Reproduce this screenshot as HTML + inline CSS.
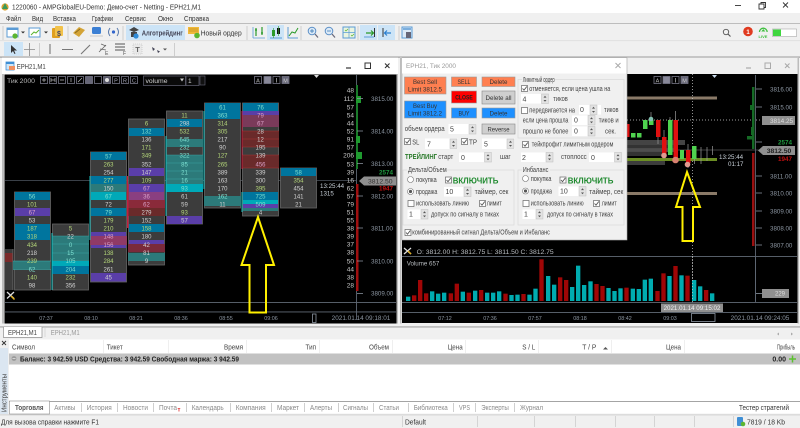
<!DOCTYPE html>
<html lang="ru"><head><meta charset="utf-8"><title>EPH21</title>
<style>
html,body{margin:0;padding:0;background:#f0f0f0;width:800px;height:428px;overflow:hidden}
svg{display:block;font-family:"Liberation Sans","DejaVu Sans",sans-serif;font-size:7px}
.c text,text.m{text-anchor:middle}
.cols text{font-size:6px;text-anchor:middle}
.g{fill:#b5d77a}.w{fill:#d2d2d2}.t{fill:#7fe0d0}.p{fill:#d9a0c8}
.ax text{font-size:6.5px;fill:#c8c8c8;text-anchor:end}
.pr text{font-size:6.2px;fill:#8d97a3}
.tm text{font-size:5.4px;fill:#8d97a3;text-anchor:middle}
.d text{font-size:7px;fill:#444}
.hd text{font-size:7px;fill:#444}
.tb text{font-size:7px;fill:#8a8a8a}
.dk{fill:#333}
.sm rect{fill:none;stroke:#778;stroke-width:.8}
</style></head><body>
<svg width="800" height="428" viewBox="0 0 800 428" xmlns="http://www.w3.org/2000/svg">
<defs>
<g id="sp"><rect width="7" height="9.5" fill="#e2e2e2" stroke="#bbb" stroke-width=".5"/><path d="M2 3.6 3.5 1.8 5 3.6zM2 6 3.5 7.8 5 6z" fill="#555"/></g>
<g id="ck"><rect x=".5" y=".5" width="6" height="6" fill="#fff" stroke="#666" stroke-width=".7"/><path d="M1.5 3.5 3 5.2 5.800 1.500" fill="none" stroke="#555" stroke-width=".9"/></g>
<g id="uk"><rect x=".5" y=".5" width="6" height="6" fill="#fff" stroke="#666" stroke-width=".7"/></g>
</defs>

<!-- window chrome -->
<rect width="800" height="13" fill="#fff"/>
<rect y="13" width="800" height="403" fill="#f0f0f0"/>
<circle cx="5" cy="7" r="3.6" fill="#d9a033"/><path d="M2 9 5 3 8 9z" fill="#3a9a5a"/>
<text x="12" y="9.500" font-size="7.500" fill="#333" textLength="189" lengthAdjust="spacingAndGlyphs">1220060 - AMPGlobalEU-Demo: Демо-счет - Netting - EPH21,M1</text>
<path d="M735 5.5h6" stroke="#333" stroke-width=".9"/>
<path d="M759 4h5v5h-5zM761 4V2.500h4.500v5H764" fill="none" stroke="#333" stroke-width=".9"/>
<path d="M783 2.500l5 5M788 2.500l-5 5" stroke="#333" stroke-width=".9"/>
<g font-size="7.500" fill="#333">
<text x="6" y="21" textLength="15" lengthAdjust="spacingAndGlyphs">Файл</text><text x="32" y="21" textLength="11" lengthAdjust="spacingAndGlyphs">Вид</text><text x="53" y="21" textLength="23" lengthAdjust="spacingAndGlyphs">Вставка</text><text x="92" y="21" textLength="21" lengthAdjust="spacingAndGlyphs">Графики</text><text x="125" y="21" textLength="21" lengthAdjust="spacingAndGlyphs">Сервис</text><text x="158" y="21" textLength="15" lengthAdjust="spacingAndGlyphs">Окно</text><text x="184" y="21" textLength="25" lengthAdjust="spacingAndGlyphs">Справка</text>
</g>
<rect y="23" width="800" height="1" fill="#bdbdbd"/>
<rect y="40.500" width="800" height=".6" fill="#d4d4d4"/>

<!-- toolbar 1 -->
<path d="M3 26v14M68 26v14M123 26v14M247 26v14M301 26v14M358 26v14M399 26v14" stroke="#c6c6c6" stroke-width=".8"/>
<rect x="7" y="28" width="11" height="9" fill="#fff" stroke="#5b9bd5"/><rect x="7" y="28" width="11" height="2" fill="#5b9bd5"/><circle cx="15" cy="36" r="2.600" fill="#5cb531"/>
<path d="M21 31.500h4l-2 2z" fill="#333"/>
<rect x="29" y="28" width="11" height="9" fill="#fff" stroke="#5b9bd5"/><path d="M31 35l3-3 2 1 3-3" fill="none" stroke="#5cb531"/>
<path d="M44 31.500h4l-2 2z" fill="#333"/>
<rect x="52" y="28" width="8" height="10" rx="1" fill="#e0a020"/><rect x="55" y="26" width="8" height="10" rx="1" fill="#f2c24a"/><text x="57" y="36" font-size="7" font-weight="bold" fill="#446">$</text>
<path d="M73 33l6-6 6 3-6 7z" fill="#d4a437"/><path d="M75 33l5-4" stroke="#8a6a20"/>
<rect x="92" y="27" width="9" height="7" rx="1.500" fill="#3b7fd4"/><path d="M90 35h13v2H90z" fill="#ddd"/>
<path d="M110 28q-3 4 0 8M117 28q3 4 0 8" fill="none" stroke="#5577aa"/><circle cx="113.500" cy="32" r="1.600" fill="#3366cc"/>
<rect x="126" y="25" width="59" height="15" fill="#cce4f7"/>
<path d="M129 30l5-3 5 3-5 2zM131 32h6v5h-6z" fill="#444"/><circle cx="136" cy="36" r="2.600" fill="#2e8bd8"/>
<text x="141.700" y="35.500" font-size="7.500" font-weight="bold" fill="#445" textLength="41" lengthAdjust="spacingAndGlyphs">Алготрейдинг</text>
<rect x="188" y="27" width="11" height="7" fill="#f0b93a"/><path d="M189 29h9M189 31h9" stroke="#a67a10" stroke-width=".6"/><circle cx="197" cy="35.500" r="2.800" fill="#5cb531"/>
<text x="200.700" y="35.500" font-size="7.500" fill="#333" textLength="41" lengthAdjust="spacingAndGlyphs">Новый ордер</text>
<path d="M253 38h12M253 27v11" stroke="#5b9bd5" stroke-width=".8"/><path d="M256 28v8M262 27v8M255 30h2M261 33h2" stroke="#2a9a2a" stroke-width="1.200"/>
<rect x="267" y="25" width="17" height="15" fill="#cce4f7"/><path d="M270 38h12" stroke="#5b9bd5"/><rect x="272" y="30" width="3" height="6" fill="#2a9a2a"/><rect x="277" y="28" width="3" height="6" fill="#111"/><path d="M273.500 28v10M278.500 26v10" stroke="#2a9a2a" stroke-width=".6"/>
<path d="M288 27v11h10" stroke="#5b9bd5" fill="none"/><path d="M289 36l3-4 3 1 3-5" fill="none" stroke="#2a9a2a"/>
<circle cx="312" cy="31" r="3.800" fill="#dceaf7" stroke="#5b8fc7"/><path d="M315 34l3 3.500" stroke="#667" stroke-width="1.200"/><path d="M310 31h4M312 29v4" stroke="#2a6fb0" stroke-width=".7"/>
<circle cx="329" cy="31" r="3.800" fill="#dceaf7" stroke="#5b8fc7"/><path d="M332 34l3 3.500" stroke="#667" stroke-width="1.200"/><path d="M327 31h4" stroke="#2a6fb0" stroke-width=".7"/>
<rect x="343" y="27" width="12" height="11" fill="#eaf4e0" stroke="#5b9bd5"/><path d="M349 27v11M343 32.500h12" stroke="#5b9bd5" stroke-width=".7"/><path d="M345 30l1 1 2-2M351 35l1 1 2-2" stroke="#5cb531" fill="none" stroke-width=".7"/>
<rect x="360" y="25" width="17" height="15" fill="#cce4f7"/><path d="M366 33h7M371 30.500l2.500 2.500-2.500 2.500" fill="none" stroke="#2a9a2a" stroke-width="1.200"/><path d="M374.500 28v9" stroke="#333"/><path d="M364 37h10" stroke="#5b9bd5"/>
<rect x="378" y="25" width="17" height="15" fill="#cce4f7"/><path d="M391 33h-6M387 30.500l-2.500 2.500 2.500 2.500" fill="none" stroke="#2a7fd0" stroke-width="1.200"/><path d="M383 28v9" stroke="#333"/>
<rect x="402" y="27" width="10" height="11" fill="#dbe9f6" stroke="#5b9bd5"/><rect x="406" y="32" width="5" height="6" fill="#667"/><path d="M403 29h8" stroke="#5b9bd5" stroke-width="1.500"/>
<circle cx="726" cy="32" r="2.700" fill="none" stroke="#555" stroke-width=".9"/><path d="M728 34l2.500 2.500" stroke="#555" stroke-width="1.100"/>
<circle cx="748" cy="31.500" r="4.800" fill="#e03a1f"/><text x="748" y="34" class="m" font-size="6" font-weight="bold" fill="#fff">1</text>
<path d="M759.500 32a3.800 3.800 0 1 1 7.600 0" fill="none" stroke="#3fbf3f" stroke-width="1.300"/><path d="M763.300 29l2 2.500h-4z" fill="#3fbf3f"/><text x="763" y="38" class="m" font-size="4" font-weight="bold" fill="#3fbf3f">LIVE</text>
<rect x="772.500" y="29" width="24" height="7.500" fill="#fff" stroke="#aaa" stroke-width=".6"/><rect x="773" y="29.500" width="8" height="6.500" fill="#3fd63f"/>

<!-- toolbar 2 -->
<rect x="4" y="42" width="19" height="14" fill="#cce4f7"/><path d="M11 45l0 8 2-2 1.500 3 1-.5-1.500-3h3z" fill="#333"/>
<path d="M29.500 43v13M24 49.500h11" stroke="#888" stroke-width=".8"/>
<path d="M39.500 43v13M174.500 43v13" stroke="#c6c6c6" stroke-width=".8"/>
<path d="M50 44v10M62 49.500h11M81 54l9-9" stroke="#777" stroke-width="1.100"/>
<path d="M99 52l7-7M101 44l5 2M100 49l6 1" stroke="#666" stroke-width=".8" fill="none"/><text x="105" y="55" font-size="5" fill="#555">E</text>
<path d="M115 44h10M115 47h10M115 50h10" stroke="#555" stroke-width="1"/><text x="123" y="55" font-size="5" fill="#555">F</text>
<rect x="133" y="44" width="9" height="10" fill="#e8e8e8" stroke="#bbb" stroke-dasharray="1 1" stroke-width=".6"/><text x="137.500" y="52" class="m" font-size="7.500" font-weight="bold" fill="#666">T</text>
<path d="M152 47l3 2-2 2zM157 50l3 1.500-2 1.500z" fill="#445"/><path d="M163 48.500h4l-2 2z" fill="#555"/>
<rect y="56.500" width="800" height="1.200" fill="#9c9c9c"/>

<!-- left window -->
<rect x="2" y="57.500" width="396" height="266" fill="#f0f0f0"/>
<rect x="2" y="58" width="396" height="16" fill="#fff"/>
<rect x="6" y="62" width="8" height="8" fill="#cfe6f7" stroke="#3f8fd5" stroke-width=".8"/><rect x="6" y="62" width="8" height="2" fill="#3f8fd5"/><rect x="9" y="66" width="6" height="4" fill="#f09060"/>
<text x="16.700" y="69" font-size="7" fill="#444" textLength="29" lengthAdjust="spacingAndGlyphs">EPH21,M1</text>
<path d="M346 68h5" stroke="#333" stroke-width="1.200"/><rect x="365" y="63" width="5.500" height="5.500" fill="none" stroke="#333"/><path d="M385 63.500l4.500 4.500M389.500 63.500 385 68" stroke="#333" stroke-width="1.100"/>
<rect x="2" y="74" width="2" height="250" fill="#bcbcbc"/><rect x="396.500" y="74" width="1.500" height="250" fill="#bcbcbc"/>
<rect x="4.500" y="74.500" width="392" height="249" fill="#000"/>

<text x="7" y="83" font-size="6.500" fill="#b8b8b8" textLength="28" lengthAdjust="spacingAndGlyphs">Тик  2000</text>
<g class="sm"><rect x="40.500" y="76.500" width="7" height="7"/><rect x="49.500" y="76.500" width="7" height="7"/><rect x="58.500" y="76.500" width="7" height="7"/><rect x="67.500" y="76.500" width="7" height="7"/><rect x="76.500" y="76.500" width="7" height="7"/><rect x="85.500" y="76.500" width="7" height="7" style="fill:#667"/><rect x="94.500" y="76.500" width="7" height="7"/><rect x="103.500" y="76.500" width="7" height="7" style="fill:#556"/><rect x="112.500" y="76.500" width="7" height="7"/><rect x="121.500" y="76.500" width="7" height="7"/><rect x="130.500" y="76.500" width="7" height="7"/></g>
<path d="M42 80h4M44 78v4M51 78v4M55 78v4M51 80h4M60 80h4M71 78v4M78 82l4-4" stroke="#bbb" stroke-width=".7"/><circle cx="107" cy="80" r="2" fill="#ddd"/>
<text x="116" y="82.500" class="m" font-size="5.500" fill="#aab">P</text><text x="125" y="82.500" class="m" font-size="5.500" fill="#aab">R</text><text x="134" y="82.500" class="m" font-size="5.500" fill="#aab">C</text>
<rect x="143.500" y="76" width="42" height="9.500" fill="#0a0a0a" stroke="#667" stroke-width=".7"/><text x="145.500" y="83" font-size="6.500" fill="#ccc" textLength="22" lengthAdjust="spacingAndGlyphs">volume</text><path d="M180 78.500h4l-2 3z" fill="#ccc"/>
<rect x="186" y="76" width="13" height="9.500" fill="#0a0a0a" stroke="#667" stroke-width=".7"/><text x="188" y="83" font-size="6.500" fill="#ccc">1</text>
<rect x="200" y="76" width="5" height="9" fill="#111" stroke="#667" stroke-width=".6"/>
<g class="sm"><rect x="254.500" y="76.500" width="7" height="7"/><rect x="264" y="76.500" width="7" height="7" style="fill:#889"/><rect x="273" y="76.500" width="7" height="7"/><rect x="282" y="76.500" width="7" height="7" style="fill:#667"/></g>
<text x="258" y="82.500" class="m" font-size="5.500" fill="#bbb">A</text><text x="276.500" y="82.500" class="m" font-size="6" fill="#ddd">I</text><text x="285.500" y="82.500" class="m" font-size="5.500" fill="#ccc">M</text>
<path d="M314 75h5l-2.500 3z" fill="#ddd"/>

<rect x="5" y="180" width="351" height="1" fill="#3a4048"/>
<rect x="5" y="302" width="391" height=".9" fill="#5f6874"/>
<rect x="5" y="311.500" width="391" height=".9" fill="#5f6874"/>

<!-- footprint columns -->
<g class="cols">
<!-- col0 -->
<rect x="5" y="249" width="8" height="41" fill="#3c3c3c"/><rect x="5" y="253" width="8" height="9" fill="#7a2a2a"/><path d="M13 249v41" stroke="#666"/>
<!-- col1 -->
<rect x="14.500" y="192" width="36" height="98" fill="#3c3c3c" stroke="#666" stroke-width=".8"/>
<rect x="15" y="192" width="35" height="8" fill="#00759e"/><rect x="15" y="208" width="35" height="8" fill="#5a3ea8"/><rect x="15" y="224" width="35" height="16" fill="#00759e"/><rect x="13" y="261" width="37" height="8.500" fill="#2c7a7a"/><path d="M13 261h38M13 269.500h38" stroke="#3cb0b0" stroke-width=".5"/>
<g>
<text x="32" y="198.500" class="t">56</text><text x="32" y="206.500" class="g">101</text><text x="32" y="214.500" class="p">67</text><text x="32" y="222.500" class="w">53</text><text x="32" y="230.500" class="g">187</text><text x="32" y="238.500" class="g">318</text><text x="32" y="247" class="g">434</text><text x="32" y="255" class="w">218</text><text x="32" y="263" class="g">239</text><text x="32" y="271.500" class="t">62</text><text x="32" y="279.500" class="g">140</text><text x="32" y="287.500" class="w">98</text></g>
<!-- col2 -->
<rect x="52.500" y="224" width="36" height="66" fill="#3c3c3c" stroke="#666" stroke-width=".8"/>
<rect x="52" y="236" width="37" height="25" fill="#2c7a7a"/><path d="M52 236h37M52 244h37M52 253h37M52 261h37" stroke="#3cb0b0" stroke-width=".4"/>
<rect x="52" y="261" width="37" height="5" fill="#00a9b8"/><rect x="52" y="266" width="37" height="8" fill="#00759e"/><path d="M52 233v57" stroke="#19c0c0"/>
<text x="70.500" y="230.500" class="g">5</text><text x="70.500" y="238.500" class="w">22</text><text x="70.500" y="247" class="t">0</text><text x="70.500" y="255" class="t">15</text><text x="70.500" y="263" class="t">105</text><text x="70.500" y="271.500" class="t">204</text><text x="70.500" y="279.500" class="g">232</text><text x="70.500" y="287.500" class="w">356</text>
<!-- col3 -->
<rect x="90.500" y="152" width="36" height="130" fill="#3c3c3c" stroke="#666" stroke-width=".8"/>
<rect x="91" y="152" width="35" height="8" fill="#00759e"/><rect x="91" y="176" width="35" height="8" fill="#00759e"/><rect x="91" y="184" width="35" height="8" fill="#2c7a7a"/><rect x="91" y="192" width="35" height="8" fill="#00a9b8"/><rect x="91" y="208" width="35" height="8" fill="#00759e"/><rect x="91" y="232" width="35" height="16" fill="#5a3ea8"/><rect x="90" y="236" width="37" height="9" fill="#9a3a5a" opacity=".85"/><rect x="91" y="273" width="35" height="8.500" fill="#5a3ea8"/>
<path d="M90 176v64" stroke="#19c0c0"/><path d="M127.500 176v52" stroke="#c02040"/>
<text x="108.500" y="158.500" class="t">57</text><text x="108.500" y="166.500" class="g">263</text><text x="108.500" y="174.500" class="w">254</text><text x="108.500" y="182.500" class="g">277</text><text x="108.500" y="190.500" class="w">150</text><text x="108.500" y="198.500" class="t">67</text><text x="108.500" y="206.500" class="w">72</text><text x="108.500" y="214.500" class="t">79</text><text x="108.500" y="222.500" class="g">179</text><text x="108.500" y="230.500" class="g">210</text><text x="108.500" y="238.500" class="p">148</text><text x="108.500" y="247" class="p">156</text><text x="108.500" y="255" class="g">138</text><text x="108.500" y="263" class="g">284</text><text x="108.500" y="271.500" class="w">261</text><text x="108.500" y="279.500" class="w">45</text>
<!-- col4 -->
<rect x="128.500" y="119" width="36" height="146" fill="#3c3c3c" stroke="#666" stroke-width=".8"/>
<rect x="129" y="128" width="35" height="8" fill="#00759e"/><rect x="129" y="168" width="35" height="8" fill="#5a3ea8"/><rect x="129" y="184" width="35" height="8" fill="#5a3ea8"/><rect x="129" y="192" width="35" height="8" fill="#8a3f80"/><rect x="128" y="200" width="37" height="8" fill="#8a2a3a"/><rect x="128" y="208" width="37" height="8" fill="#6a2a2a"/><rect x="129" y="224" width="35" height="8" fill="#00759e"/><rect x="129" y="240" width="35" height="8" fill="#5a3ea8"/><rect x="128" y="244" width="37" height="8" fill="#7a2a3a"/><rect x="128" y="253" width="37" height="8" fill="#2c7a7a"/>
<path d="M128 184v44" stroke="#c02040"/>
<text x="146.500" y="125.500" class="g">6</text><text x="146.500" y="133.500" class="t">132</text><text x="146.500" y="141.500" class="w">136</text><text x="146.500" y="149.500" class="g">171</text><text x="146.500" y="157.500" class="g">349</text><text x="146.500" y="166.500" class="w">352</text><text x="146.500" y="174.500" class="w">147</text><text x="146.500" y="182.500" class="g">109</text><text x="146.500" y="190.500" class="p">67</text><text x="146.500" y="198.500" class="p">36</text><text x="146.500" y="206.500" class="p">62</text><text x="146.500" y="214.500" class="w">279</text><text x="146.500" y="222.500" class="w">152</text><text x="146.500" y="230.500" class="g">158</text><text x="146.500" y="238.500" class="w">180</text><text x="146.500" y="247" class="w">42</text><text x="146.500" y="255" class="w">81</text><text x="146.500" y="263" class="w">9</text>
<!-- col5 -->
<rect x="166.500" y="111" width="36" height="113" fill="#3c3c3c" stroke="#666" stroke-width=".8"/>
<rect x="167" y="119" width="35" height="8" fill="#00759e"/><rect x="166" y="139" width="37" height="8" fill="#2c7a7a"/><rect x="166" y="155" width="37" height="29" fill="#2c7a7a"/><path d="M166 155h37M166 163h37M166 171h37M166 179h37" stroke="#3cb0b0" stroke-width=".4"/><rect x="166" y="184" width="37" height="8" fill="#00a9b8"/><rect x="167" y="216" width="35" height="8" fill="#5a3ea8"/>
<path d="M166 136v80" stroke="#19c0c0"/>
<text x="184.500" y="117.500" class="g">11</text><text x="184.500" y="125.500" class="w">298</text><text x="184.500" y="133.500" class="g">532</text><text x="184.500" y="141.500" class="t">645</text><text x="184.500" y="149.500" class="t">232</text><text x="184.500" y="157.500" class="t">322</text><text x="184.500" y="166.500" class="t">85</text><text x="184.500" y="174.500" class="t">21</text><text x="184.500" y="182.500" class="t">16</text><text x="184.500" y="190.500" class="t">93</text><text x="184.500" y="198.500" class="w">61</text><text x="184.500" y="206.500" class="w">59</text><text x="184.500" y="214.500" class="g">93</text><text x="184.500" y="222.500" class="w">57</text>
<!-- col6 -->
<rect x="204.500" y="103" width="36" height="105" fill="#3c3c3c" stroke="#666" stroke-width=".8"/>
<rect x="205" y="103" width="35" height="8" fill="#00759e"/><rect x="205" y="111" width="35" height="8" fill="#00759e"/><rect x="204" y="196" width="37" height="10" fill="#2c7a7a"/>
<path d="M204 111v78" stroke="#19c0c0"/>
<text x="222.500" y="109.500" class="t">61</text><text x="222.500" y="117.500" class="t">363</text><text x="222.500" y="125.500" class="g">314</text><text x="222.500" y="133.500" class="g">305</text><text x="222.500" y="141.500" class="w">217</text><text x="222.500" y="149.500" class="w">90</text><text x="222.500" y="157.500" class="g">127</text><text x="222.500" y="166.500" class="g">265</text><text x="222.500" y="174.500" class="w">389</text><text x="222.500" y="182.500" class="w">163</text><text x="222.500" y="190.500" class="w">170</text><text x="222.500" y="198.500" class="t">162</text><text x="222.500" y="206.500" class="w">11</text>
<!-- col7 -->
<rect x="242.500" y="103" width="36" height="113" fill="#3c3c3c" stroke="#666" stroke-width=".8"/>
<rect x="243" y="103" width="35" height="8" fill="#00759e"/><rect x="242" y="111" width="37" height="4" fill="#5a3ea8"/><rect x="242" y="115" width="37" height="12" fill="#7a3a5a"/><rect x="242" y="131" width="37" height="16" fill="#6a2a2a"/><rect x="242" y="155" width="37" height="13" fill="#6a2a2a"/><path d="M242 131h37M242 139h37M242 147h37M242 155h37M242 168h37" stroke="#b33" stroke-width=".4"/>
<rect x="243" y="192" width="35" height="8" fill="#00759e"/><rect x="243" y="200" width="35" height="4" fill="#00a9b8"/><rect x="243" y="204" width="35" height="4" fill="#5a3ea8"/><rect x="243" y="208" width="35" height="3" fill="#2c7a7a"/>
<path d="M242 111v58" stroke="#c02040"/><path d="M242 192v20" stroke="#19c0c0"/>
<text x="260.500" y="109.500" class="t">76</text><text x="260.500" y="117.500" class="p">79</text><text x="260.500" y="125.500" class="p">67</text><text x="260.500" y="133.500" class="w">28</text><text x="260.500" y="141.500" class="w">12</text><text x="260.500" y="149.500" class="w">195</text><text x="260.500" y="157.500" class="w">139</text><text x="260.500" y="166.500" class="p">456</text><text x="260.500" y="174.500" class="w">339</text><text x="260.500" y="182.500" class="w">300</text><text x="260.500" y="190.500" class="g">395</text><text x="260.500" y="198.500" class="t">725</text><text x="260.500" y="206.500" class="t">509</text><text x="260.500" y="214.500" class="w">4</text>
<!-- col8 -->
<rect x="280.500" y="168" width="36" height="40" fill="#3c3c3c" stroke="#666" stroke-width=".8"/>
<rect x="281" y="168" width="35" height="8" fill="#00759e"/>
<text x="298.500" y="174.500" class="t">58</text><text x="298.500" y="182.500" class="g">354</text><text x="298.500" y="190.500" class="w">454</text><text x="298.500" y="198.500" class="w">141</text><text x="298.500" y="206.500" class="w">21</text>
</g>
<text x="320" y="188" font-size="6.200" fill="#c8d0d8">13:25:44</text><text x="320" y="195.500" font-size="6.200" fill="#c8d0d8">1315</text>

<!-- tools icon -->
<path d="M7 292l7 6.500M14 292l-7 6.500" stroke="#ddd" stroke-width="1.300"/><path d="M11 296l3.500 3.500" stroke="#e0b020" stroke-width="1.500"/>

<!-- left axis -->
<path d="M356.500 75v245" stroke="#5f6874" stroke-width=".9"/>
<rect x="356" y="85" width="2" height="84" fill="#1a7a2a"/><rect x="356" y="96" width="5" height="7" fill="#1f9a2f"/><rect x="356" y="136" width="4" height="7" fill="#1f9a2f"/><rect x="356" y="152" width="6" height="7" fill="#1f9a2f"/>
<rect x="356" y="184" width="2.500" height="107" fill="#a01010"/>
<g class="ax" transform="translate(0 -.6)"><text x="354" y="93">48</text><text x="354" y="101.500">112</text><text x="354" y="110">57</text><text x="354" y="118">54</text><text x="354" y="126">44</text><text x="354" y="134">52</text><text x="354" y="142">91</text><text x="354" y="150">57</text><text x="354" y="158">206</text><text x="354" y="167">53</text><text x="354" y="175">39</text><text x="354" y="183">16</text><text x="354" y="191">62</text><text x="354" y="199">57</text><text x="354" y="207">79</text><text x="354" y="215">51</text><text x="354" y="223">55</text><text x="354" y="231">38</text><text x="354" y="239">39</text><text x="354" y="247">37</text><text x="354" y="255">38</text><text x="354" y="264">50</text><text x="354" y="272">44</text><text x="354" y="280">38</text><text x="354" y="288">28</text></g>
<path d="M357 98.500h6M357 131h6M357 163.500h6M357 196h6M357 228h6M357 261h6M357 293.500h6" stroke="#8d97a3" stroke-width=".8"/>
<g class="pr"><text x="371" y="101">3815.00</text><text x="371" y="133.500">3814.00</text><text x="371" y="166">3813.00</text><text x="371" y="198.500">3812.00</text><text x="371" y="230.500">3811.00</text><text x="371" y="263.500">3810.00</text><text x="371" y="295.500">3809.00</text></g>
<text x="379" y="174.500" font-size="6.300" font-weight="bold" fill="#1f9a3f">2574</text>
<text x="379" y="190.500" font-size="6.300" font-weight="bold" fill="#c01010">1947</text>
<path d="M359 181l5-4.500h32v9h-32z" fill="#8f8f8f"/><text x="368" y="183.500" font-size="6.800" fill="#333">3812.50</text>
<g class="tm"><text x="46" y="320">07:37</text><text x="91" y="320">08:10</text><text x="136" y="320">08:21</text><text x="181" y="320">08:36</text><text x="226" y="320">08:55</text><text x="271" y="320">09:06</text><text x="361" y="320" style="font-size:6.400px">2021.01.14 09:18:01</text></g>
<rect x="312.500" y="314" width="3.500" height="8.500" fill="none" stroke="#8d97a3" stroke-width=".8"/>
<!-- yellow arrow left -->
<path d="M258 217 241.500 265H249.500V312.500H266V265H274Z" fill="none" stroke="#fff000" stroke-width="2"/>

<!-- right window -->
<rect x="400" y="57.500" width="398.500" height="266" fill="#f0f0f0"/>
<rect x="400" y="58" width="1.500" height="266" fill="#bcbcbc"/><rect x="797.500" y="58" width="1.500" height="266" fill="#bcbcbc"/>
<path d="M746 68h5" stroke="#aaa" stroke-width="1.200"/><rect x="765" y="63" width="5.500" height="5.500" fill="none" stroke="#aaa"/><path d="M785 63.500l4.500 4.500M789.500 63.500 785 68" stroke="#aaa" stroke-width="1.100"/>
<rect x="402" y="74" width="395.500" height="249" fill="#000"/>

<!-- right chart -->
<rect x="627" y="96.500" width="90" height="3" fill="#8a7a68"/><rect x="627" y="192" width="90" height="3" fill="#8a7a68"/>
<rect x="627" y="140" width="58" height="5" fill="#444"/><rect x="627" y="145" width="50" height="3" fill="#333"/><rect x="627" y="148" width="48" height="4" fill="#4a4a4a"/><rect x="627" y="152" width="38" height="4" fill="#333"/><rect x="627" y="161" width="38" height="4" fill="#3c3c3c"/>
<rect x="627" y="158" width="90" height="3" fill="#6b8e23"/>
<path d="M627 120H762" stroke="#cfcfcf" stroke-width=".7" stroke-dasharray="1 2"/>
<path d="M692.500 74v240" stroke="#cfcfcf" stroke-width=".7" stroke-dasharray="1 2"/>
<path d="M627 150H762" stroke="#555" stroke-width=".7"/>
<!-- candles -->
<g>
<path d="M651 112v8M664.500 137v5M658 137v7M664 130v8M670 120v-3M675.500 111v9M675.500 158v5M682 150v9M688 144v6M688 164v4M694.500 159v5M701 147v17M707 147v14M712.500 146v9" stroke="#999" stroke-width=".7"/>
<rect x="627" y="124" width="2.500" height="13" fill="#e01010"/>
<rect x="631" y="133" width="4.500" height="4.500" fill="#4fd24f"/><rect x="637" y="133" width="4.500" height="4.500" fill="#4fd24f"/>
<rect x="643" y="120" width="4.500" height="9" fill="#4fd24f"/><rect x="649" y="120" width="4.500" height="5" fill="#4fd24f"/><circle cx="651" cy="119" r="2.300" fill="#80c0b0"/>
<rect x="656" y="120" width="4.500" height="17" fill="#e01010"/>
<rect x="662" y="137" width="4.500" height="18" fill="#e01010"/><circle cx="664" cy="155.500" r="2.800" fill="#e09a90"/>
<rect x="668" y="120" width="4.500" height="35" fill="#4fd24f"/>
<rect x="673.500" y="120" width="4.500" height="38" fill="#e01010"/><circle cx="675.500" cy="160" r="3.300" fill="#d88070"/>
<rect x="680" y="150" width="4" height="9" fill="#4fd24f"/>
<rect x="686" y="150" width="4.500" height="13" fill="#e01010"/><circle cx="687.500" cy="164.500" r="2.800" fill="#e09a90"/>
<rect x="692" y="146" width="4.500" height="13" fill="#4fd24f"/>
</g>
<text x="719" y="159" font-size="6.200" fill="#c8d0d8">13:25:44</text><text x="728" y="166" font-size="6.200" fill="#c8d0d8">01:17</text>
<path d="M687 172 676 207H682.500V241H693V207H700Z" fill="none" stroke="#fff000" stroke-width="2"/>
<g class="sm"><rect x="654" y="76.500" width="7" height="7"/><rect x="663" y="76.500" width="7" height="7" style="fill:#889"/><rect x="672" y="76.500" width="7" height="7"/><rect x="681" y="76.500" width="7" height="7" style="fill:#667"/></g>
<text x="657.500" y="82.500" class="m" font-size="5.500" fill="#bbb">A</text><text x="675.500" y="82.500" class="m" font-size="6" fill="#ddd">I</text><text x="684.500" y="82.500" class="m" font-size="5.500" fill="#ccc">M</text>
<path d="M712 75h5l-2.500 3z" fill="#cde"/>
<path d="M755.500 75v226" stroke="#5f6874" stroke-width=".9"/>
<rect x="752" y="87" width="2.500" height="62" fill="#156a25"/><rect x="750" y="105" width="4.500" height="5" fill="#156a25"/><rect x="747" y="136" width="7" height="3.500" fill="#156a25"/><rect x="751" y="127" width="3.500" height="8" fill="#156a25"/>
<rect x="752" y="153" width="2.500" height="93" fill="#9a1010" stroke-dasharray="3 1"/>
<path d="M756 89h6M756 107h6M756 142h6M756 176h6M756 193h6M756 211h6M756 228h6M756 245h6" stroke="#8d97a3" stroke-width=".8"/>
<g class="pr"><text x="770" y="91.500">3816.00</text><text x="770" y="109.500">3815.00</text><text x="770" y="178.500">3811.00</text><text x="770" y="195.500">3810.00</text><text x="770" y="213.500">3809.00</text><text x="770" y="230.500">3808.00</text><text x="770" y="247.500">3807.00</text></g>
<rect x="762" y="116" width="33" height="9" fill="#8f8f8f"/><text x="770" y="123" font-size="6.400" fill="#ddd">3814.25</text>
<text x="778" y="144.500" font-size="6.300" font-weight="bold" fill="#1f9a3f">2574</text>
<text x="778" y="161" font-size="6.300" font-weight="bold" fill="#c01010">1947</text>
<path d="M758 150.500l5-4.500h32v9h-32z" fill="#8f8f8f"/><text x="766.700" y="153" font-size="6.800" font-weight="bold" fill="#222">3812.50</text>

<!-- volume subwindow -->
<path d="M404 248l7 6M411 248l-7 6" stroke="#ddd" stroke-width="1.300"/><path d="M408 251l3 3" stroke="#e0b020" stroke-width="1.500"/>
<text x="416.700" y="254" font-size="6.500" fill="#b8bcc0" textLength="137" lengthAdjust="spacingAndGlyphs">O: 3812.00   H: 3812.75   L: 3811.50   C: 3812.75</text>
<rect x="402" y="256" width="395" height=".9" fill="#5f6874"/>
<rect x="402" y="302" width="395" height=".9" fill="#5f6874"/>
<rect x="402" y="312" width="395" height=".9" fill="#5f6874"/>
<text x="406.700" y="265.500" font-size="6.500" fill="#b8bcc0" textLength="32.700" lengthAdjust="spacingAndGlyphs">Volume 657</text>
<path d="M755.500 256v46" stroke="#5f6874" stroke-width=".9"/>
<g transform="translate(400 240) scale(.33333)">
<g fill="#00acb0"><rect x="18" y="170" width="13" height="13"/><rect x="90" y="154" width="13" height="29"/><rect x="108" y="161" width="13" height="22"/><rect x="126" y="158" width="13" height="25"/><rect x="182" y="155" width="13" height="28"/><rect x="219" y="152" width="13" height="31"/><rect x="255" y="158" width="13" height="25"/><rect x="273" y="158" width="13" height="25"/><rect x="291" y="154" width="13" height="29"/><rect x="328" y="165" width="13" height="18"/><rect x="346" y="164" width="13" height="19"/><rect x="382" y="164" width="13" height="19"/><rect x="400" y="146" width="13" height="37"/><rect x="438" y="108" width="13" height="75"/><rect x="456" y="134" width="13" height="49"/><rect x="510" y="141" width="13" height="42"/><rect x="528" y="77" width="13" height="106"/><rect x="546" y="135" width="13" height="48"/><rect x="565" y="124" width="13" height="59"/><rect x="619" y="144" width="13" height="39"/><rect x="637" y="153" width="13" height="30"/><rect x="655" y="145" width="13" height="38"/><rect x="692" y="146" width="13" height="37"/><rect x="710" y="147" width="13" height="36"/><rect x="728" y="119" width="13" height="64"/><rect x="746" y="116" width="13" height="67"/><rect x="802" y="108" width="13" height="75"/><rect x="838" y="106" width="13" height="77"/><rect x="876" y="120" width="13" height="63"/><rect x="894" y="139" width="13" height="44"/><rect x="930" y="160" width="13" height="23"/></g>
<g fill="#a00606"><rect x="36" y="166" width="13" height="17"/><rect x="54" y="120" width="13" height="63"/><rect x="72" y="160" width="13" height="23"/><rect x="146" y="160" width="13" height="23"/><rect x="164" y="131" width="13" height="52"/><rect x="200" y="158" width="13" height="25"/><rect x="237" y="150" width="13" height="33"/><rect x="310" y="161" width="13" height="22"/><rect x="364" y="162" width="13" height="21"/><rect x="418" y="58" width="13" height="125"/><rect x="474" y="112" width="13" height="71"/><rect x="492" y="120" width="13" height="63"/><rect x="583" y="132" width="13" height="51"/><rect x="601" y="138" width="13" height="45"/><rect x="673" y="143" width="13" height="40"/><rect x="766" y="153" width="13" height="30"/><rect x="784" y="100" width="13" height="83"/><rect x="820" y="78" width="13" height="105"/><rect x="856" y="107" width="13" height="76"/><rect x="912" y="150" width="13" height="33"/></g>
</g>
<path d="M692.500 256v46" stroke="#cfcfcf" stroke-width=".7" stroke-dasharray="1 2"/>
<path d="M756 293.500h6" stroke="#8d97a3" stroke-width=".8"/>
<rect x="762" y="289" width="27" height="9" fill="#8f8f8f"/><text x="785" y="295.500" text-anchor="end" font-size="6" fill="#ddd">229</text>
<rect x="661" y="303.500" width="62" height="8.500" fill="#8f8f8f"/><text x="692" y="310" class="m" font-size="6.200" fill="#eee">2021.01.14  09:15:02</text>
<g class="tm"><text x="445" y="320">07:12</text><text x="490" y="320">07:36</text><text x="535" y="320">07:57</text><text x="580" y="320">08:18</text><text x="625" y="320">08:42</text><text x="670" y="320">09:03</text><text x="760" y="320" style="font-size:6.400px">2021.01.14 09:24:05</text></g>
<rect x="691.500" y="313.500" width="23.500" height="8" fill="none" stroke="#8d97a3" stroke-width=".8"/>

<!-- dialog -->
<rect x="402" y="58" width="225" height="182" fill="#f0f0f0" stroke="#a8a8a8" stroke-width=".6"/>
<rect x="402" y="58" width="224.500" height="15.500" fill="#fff"/>
<text x="406" y="68" font-size="6.500" fill="#9a9a9a" textLength="50" lengthAdjust="spacingAndGlyphs">EPH21, Тик  2000</text>
<path d="M615.500 63l5 5M620.500 63l-5 5" stroke="#aaa"/>
<g font-size="6.500" class="c">
<rect x="404.500" y="77" width="41.500" height="17" fill="#ff7f50" stroke="#999" stroke-width=".6"/><text x="425" y="84" class="dk" textLength="24" lengthAdjust="spacingAndGlyphs">Best Sell</text><text x="425" y="91.500" class="dk" textLength="34" lengthAdjust="spacingAndGlyphs">Limit 3812.5</text>
<rect x="451.500" y="77" width="25" height="9.500" fill="#ff7f50" stroke="#999" stroke-width=".6"/><text x="464" y="84" class="dk" textLength="13" lengthAdjust="spacingAndGlyphs">SELL</text>
<rect x="482" y="77" width="33" height="9.500" fill="#ff7f50" stroke="#999" stroke-width=".6"/><text x="498.500" y="84" class="dk" textLength="18" lengthAdjust="spacingAndGlyphs">Delete</text>
<rect x="404.500" y="101" width="41.500" height="17" fill="#1e90ff" stroke="#999" stroke-width=".6"/><text x="425" y="108" class="dk" textLength="24" lengthAdjust="spacingAndGlyphs">Best Buy</text><text x="425" y="115.500" class="dk" textLength="34" lengthAdjust="spacingAndGlyphs">Limit 3812.2</text>
<rect x="451.500" y="91" width="25" height="12" fill="#f00" stroke="#999" stroke-width=".6"/><text x="464" y="99.500" font-weight="bold" font-size="6" fill="#222" textLength="17.500" lengthAdjust="spacingAndGlyphs">CLOSE</text>
<rect x="482" y="91" width="33" height="13" fill="#cfcfcf" stroke="#888" stroke-width=".6"/><text x="498.500" y="100" class="dk" textLength="26" lengthAdjust="spacingAndGlyphs">Delete all</text>
<rect x="451.500" y="108" width="25" height="10" fill="#1e90ff" stroke="#999" stroke-width=".6"/><text x="464" y="115.500" class="dk" textLength="11" lengthAdjust="spacingAndGlyphs">BUY</text>
<rect x="482" y="108" width="33" height="10" fill="#1e90ff" stroke="#999" stroke-width=".6"/><text x="498.500" y="115.500" class="dk" textLength="18" lengthAdjust="spacingAndGlyphs">Delete</text>
<rect x="482" y="124" width="33" height="10" fill="#cfcfcf" stroke="#888" stroke-width=".6"/><text x="498.500" y="131.500" class="dk" textLength="22" lengthAdjust="spacingAndGlyphs">Reverse</text>
</g>
<g class="d">
<text x="404.700" y="131" textLength="40" lengthAdjust="spacingAndGlyphs">объем ордера</text>
<rect x="448.500" y="124" width="28" height="10" fill="#fff"/><text x="450" y="131.500">5</text><use href="#sp" x="469" y="124.500"/>
<use href="#ck" x="404" y="138"/><text x="412.300" y="144.500" textLength="7" lengthAdjust="spacingAndGlyphs">SL</text>
<rect x="425" y="138.500" width="33" height="10.500" fill="#fff"/><text x="427" y="146.500">7</text><use href="#sp" x="450" y="139"/>
<use href="#ck" x="461" y="138"/><text x="469" y="144.500" textLength="8" lengthAdjust="spacingAndGlyphs">TP</text>
<rect x="482" y="138.500" width="33" height="10.500" fill="#fff"/><text x="484" y="146.500">5</text><use href="#sp" x="507" y="139"/>
<!-- limit group -->
<rect x="518" y="79.500" width="106" height="58.500" fill="none" stroke="#dcdcdc" stroke-width=".8"/>
<rect x="522" y="77" width="33" height="6" fill="#f0f0f0"/><text x="522.700" y="82" textLength="32" lengthAdjust="spacingAndGlyphs">Лимитный ордер</text>
<use href="#ck" x="521" y="85"/><text x="529.300" y="91" textLength="81" lengthAdjust="spacingAndGlyphs">отменяется, если цена ушла на</text>
<rect x="521" y="94" width="28" height="9.500" fill="#fff"/><text x="522.500" y="101.500">4</text><use href="#sp" x="541.500" y="94"/><text x="553.300" y="101" textLength="14.500" lengthAdjust="spacingAndGlyphs">тиков</text>
<use href="#uk" x="521" y="107"/><text x="529.300" y="112.500" textLength="45.700" lengthAdjust="spacingAndGlyphs">передвигается на</text>
<rect x="579" y="105" width="22" height="9.500" fill="#fff"/><text x="580" y="112">0</text><use href="#sp" x="590" y="105"/><text x="604" y="112" textLength="14.500" lengthAdjust="spacingAndGlyphs">тиков</text>
<text x="522.700" y="122.500" textLength="45.700" lengthAdjust="spacingAndGlyphs">если цена прошла</text>
<rect x="572" y="115.500" width="23" height="9.500" fill="#fff"/><text x="574" y="122.500">0</text><use href="#sp" x="588" y="115.500"/><text x="598.700" y="122.500" textLength="20" lengthAdjust="spacingAndGlyphs">тиков и</text>
<text x="522.700" y="133.500" textLength="45.700" lengthAdjust="spacingAndGlyphs">прошло не более</text>
<rect x="572" y="126.500" width="23" height="9.500" fill="#fff"/><text x="574" y="133.500">0</text><use href="#sp" x="588" y="126.500"/><text x="605" y="133.500" textLength="11" lengthAdjust="spacingAndGlyphs">сек.</text>
<use href="#ck" x="522" y="141"/><text x="531.700" y="146.500" textLength="81.700" lengthAdjust="spacingAndGlyphs">тейкпрофит лимитным ордером</text>
<!-- trailing -->
<text x="405" y="159" style="font-size:7px;font-weight:bold;fill:#2a7a2a" textLength="32" lengthAdjust="spacingAndGlyphs">ТРЕЙЛИНГ</text><text x="438.300" y="159" textLength="15" lengthAdjust="spacingAndGlyphs">старт</text>
<rect x="459" y="152.500" width="33" height="9.500" fill="#fff"/><text x="461" y="160">0</text><use href="#sp" x="484.500" y="152.500"/>
<text x="500" y="159" textLength="10.700" lengthAdjust="spacingAndGlyphs">шаг</text>
<rect x="521" y="152.500" width="32" height="9.500" fill="#fff"/><text x="522" y="160">2</text><use href="#sp" x="546" y="152.500"/>
<text x="561" y="159" textLength="25.700" lengthAdjust="spacingAndGlyphs">стоплосс</text>
<rect x="589" y="152.500" width="33" height="9.500" fill="#fff"/><text x="591" y="160">0</text><use href="#sp" x="614.500" y="152.500"/>
<!-- delta group -->
<rect x="403" y="170" width="111" height="55" fill="none" stroke="#dcdcdc" stroke-width=".8"/>
<rect x="407" y="167" width="40" height="6" fill="#f0f0f0"/><text x="408" y="172" textLength="38.700" lengthAdjust="spacingAndGlyphs">Дельта/Объем</text>
<circle cx="410.500" cy="179.500" r="3" fill="#fff" stroke="#777" stroke-width=".6"/><text x="416" y="182" textLength="20.700" lengthAdjust="spacingAndGlyphs">покупка</text>
<use href="#ck" x="445" y="176.500"/><text x="452.700" y="183.500" style="font-size:8px;font-weight:bold;fill:#1f8a2f" textLength="45.700" lengthAdjust="spacingAndGlyphs">ВКЛЮЧИТЬ</text>
<circle cx="410.500" cy="191.500" r="3" fill="#fff" stroke="#777" stroke-width=".6"/><circle cx="410.500" cy="191.500" r="1.600" fill="#555"/><text x="416" y="194" textLength="21.300" lengthAdjust="spacingAndGlyphs">продажа</text>
<rect x="444" y="187" width="27" height="9.500" fill="#fff"/><text x="445.500" y="194">10</text><use href="#sp" x="464" y="187"/><text x="474.700" y="194" textLength="33.700" lengthAdjust="spacingAndGlyphs">таймер, сек</text>
<use href="#uk" x="407.500" y="200"/><text x="416" y="205.500" textLength="53" lengthAdjust="spacingAndGlyphs">использовать линию</text>
<use href="#ck" x="479" y="200"/><text x="486.700" y="205.500" textLength="15" lengthAdjust="spacingAndGlyphs">лимит</text>
<rect x="407.500" y="209.500" width="21" height="9.500" fill="#fff"/><text x="409" y="216.500">1</text><use href="#sp" x="421" y="209.500"/><text x="431" y="216.500" textLength="68" lengthAdjust="spacingAndGlyphs">допуск по сигналу в тиках</text>
<!-- imbalance group -->
<rect x="518" y="170" width="106" height="55" fill="none" stroke="#dcdcdc" stroke-width=".8"/>
<rect x="522" y="167" width="28" height="6" fill="#f0f0f0"/><text x="522.700" y="172" textLength="25.700" lengthAdjust="spacingAndGlyphs">Инбаланс</text>
<circle cx="525.500" cy="178.500" r="3" fill="#fff" stroke="#777" stroke-width=".6"/><text x="530.700" y="181" textLength="20.700" lengthAdjust="spacingAndGlyphs">покупка</text>
<use href="#ck" x="559.500" y="176.500"/><text x="567.700" y="183.500" style="font-size:8px;font-weight:bold;fill:#1f8a2f" textLength="45.700" lengthAdjust="spacingAndGlyphs">ВКЛЮЧИТЬ</text>
<circle cx="525.500" cy="191" r="3" fill="#fff" stroke="#777" stroke-width=".6"/><circle cx="525.500" cy="191" r="1.600" fill="#555"/><text x="530.700" y="193.500" textLength="21.300" lengthAdjust="spacingAndGlyphs">продажа</text>
<rect x="558.500" y="186.500" width="27" height="9.500" fill="#fff"/><text x="560" y="193.500">10</text><use href="#sp" x="579" y="186.500"/><text x="589.300" y="194" textLength="34" lengthAdjust="spacingAndGlyphs">таймер, сек</text>
<use href="#uk" x="522.500" y="200"/><text x="530.700" y="205.500" textLength="53" lengthAdjust="spacingAndGlyphs">использовать линию</text>
<use href="#ck" x="593" y="200"/><text x="601.700" y="205.500" textLength="15" lengthAdjust="spacingAndGlyphs">лимит</text>
<rect x="522.500" y="209.500" width="21" height="9.500" fill="#fff"/><text x="524" y="216.500">1</text><use href="#sp" x="536" y="209.500"/><text x="547" y="216.500" textLength="66" lengthAdjust="spacingAndGlyphs">допуск по сигналу в тиках</text>
<use href="#ck" x="404.500" y="229"/><text x="412.300" y="234.500" textLength="137.700" lengthAdjust="spacingAndGlyphs">комбинированный сигнал Дельта/Объем и Инбаланс</text>
</g>

<!-- bottom tabs -->
<rect y="323.500" width="800" height="3" fill="#f0f0f0"/><rect y="326.500" width="800" height=".9" fill="#8e8e8e"/>
<path d="M3.500 327v10.500h38.500V327" fill="#fff" stroke="#8e8e8e" stroke-width=".7"/>
<text x="8" y="335" font-size="7" fill="#444" textLength="29" lengthAdjust="spacingAndGlyphs">EPH21,M1</text>
<text x="50.700" y="335" font-size="7" fill="#999" textLength="29" lengthAdjust="spacingAndGlyphs">EPH21,M1</text>
<path d="M45 328v9" stroke="#ccc" stroke-width=".7"/>
<path d="M779 332.500l-2 1.500 2 1.500zM791 332.500l2 1.500-2 1.500z" fill="#aaa"/>

<!-- toolbox -->
<path d="M2 341l4 4M6 341l-4 4" stroke="#333" stroke-width=".9"/>
<rect x="0" y="348" width="8" height="66" fill="#dbe6f1"/>
<text transform="translate(6.500 412) rotate(-90)" font-size="7" fill="#444" textLength="38" lengthAdjust="spacingAndGlyphs">Инструменты</text>
<rect x="9" y="339.500" width="791" height="74" fill="#fff"/>
<g stroke="#e8e8e8" stroke-width=".7"><path d="M103.500 340v13M168.500 340v13M246.500 340v13M319.500 340v13M392.500 340v13M465.500 340v13M538.500 340v13M611.500 340v13M684.500 340v13"/></g>
<g class="hd"><text x="12" y="349.500" textLength="23" lengthAdjust="spacingAndGlyphs">Символ</text><text x="106.700" y="349.500" textLength="16" lengthAdjust="spacingAndGlyphs">Тикет</text><text x="224" y="349.500" textLength="19" lengthAdjust="spacingAndGlyphs">Время</text><text x="305.500" y="349.500" textLength="10.500" lengthAdjust="spacingAndGlyphs">Тип</text><text x="369" y="349.500" textLength="20" lengthAdjust="spacingAndGlyphs">Объем</text><text x="447.700" y="349.500" textLength="15" lengthAdjust="spacingAndGlyphs">Цена</text><text x="522.300" y="349.500" textLength="13" lengthAdjust="spacingAndGlyphs">S / L</text><text x="582.300" y="349.500" textLength="14" lengthAdjust="spacingAndGlyphs">T / P</text><text x="666" y="349.500" textLength="15" lengthAdjust="spacingAndGlyphs">Цена</text><text x="777" y="349.500" textLength="18" lengthAdjust="spacingAndGlyphs">Прибыль</text></g>
<path d="M603 349.500h5l-2.500-2.500z" fill="#555"/>
<rect x="9" y="353.500" width="791" height="11" fill="#c2c2c2"/>
<circle cx="14" cy="358.500" r="2.400" fill="#9a9a9a"/><path d="M12.500 358.500h3" stroke="#eee" stroke-width=".7"/>
<text x="20" y="361.500" font-size="7" font-weight="bold" fill="#222" textLength="219" lengthAdjust="spacingAndGlyphs">Баланс: 3 942.59 USD  Средства: 3 942.59  Свободная маржа: 3 942.59</text>
<text x="786" y="361.500" text-anchor="end" font-size="7" font-weight="bold" fill="#222">0.00</text>
<path d="M789 359h7M792.500 355.500v7" stroke="#5cc030" stroke-width="1.500"/>
<rect x="9" y="401" width="791" height=".8" fill="#8e8e8e"/>
<rect x="9.500" y="401" width="40" height="13" fill="#fff" stroke="#8e8e8e" stroke-width=".6"/>
<text x="15" y="410" font-size="7" font-weight="bold" fill="#444" opacity=".9" textLength="28.500" lengthAdjust="spacingAndGlyphs">Торговля</text>
<g class="tb">
<text x="54.300" y="410" textLength="21" lengthAdjust="spacingAndGlyphs">Активы</text><text x="86.700" y="410" textLength="25" lengthAdjust="spacingAndGlyphs">История</text><text x="123" y="410" textLength="25" lengthAdjust="spacingAndGlyphs">Новости</text><text x="159" y="410" textLength="18" lengthAdjust="spacingAndGlyphs">Почта</text><text x="191.700" y="410" textLength="32" lengthAdjust="spacingAndGlyphs">Календарь</text><text x="235.700" y="410" textLength="30" lengthAdjust="spacingAndGlyphs">Компания</text><text x="277" y="410" textLength="22" lengthAdjust="spacingAndGlyphs">Маркет</text><text x="310" y="410" textLength="22" lengthAdjust="spacingAndGlyphs">Алерты</text><text x="343" y="410" textLength="25" lengthAdjust="spacingAndGlyphs">Сигналы</text><text x="379" y="410" textLength="20" lengthAdjust="spacingAndGlyphs">Статьи</text><text x="413.700" y="410" textLength="34" lengthAdjust="spacingAndGlyphs">Библиотека</text><text x="459" y="410" textLength="11" lengthAdjust="spacingAndGlyphs">VPS</text><text x="481.300" y="410" textLength="27.500" lengthAdjust="spacingAndGlyphs">Эксперты</text><text x="520" y="410" textLength="23" lengthAdjust="spacingAndGlyphs">Журнал</text>
</g>
<text x="177.500" y="411.500" font-size="6" font-weight="bold" fill="#e03030">т</text>
<path d="M81.500 403v9M117.500 403v9M153.500 403v9M186.500 403v9M230.500 403v9M271.500 403v9M304.500 403v9M338.500 403v9M373.500 403v9M408.500 403v9M453.500 403v9M475.500 403v9M514.500 403v9" stroke="#bbb" stroke-width=".7"/>
<text x="739" y="410" font-size="7" fill="#333" textLength="50" lengthAdjust="spacingAndGlyphs">Тестер стратегий</text>
<rect y="414.500" width="800" height=".8" fill="#c8c8c8"/>

<!-- status bar -->
<text x="1" y="424.500" font-size="7" fill="#333" textLength="98" lengthAdjust="spacingAndGlyphs">Для вызова справки нажмите F1</text>
<text x="405" y="424.500" font-size="7" fill="#333" textLength="21" lengthAdjust="spacingAndGlyphs">Default</text>
<path d="M402.500 416v11M477.500 416v11M534.500 416v11M575.500 416v11M615.500 416v11M654.500 416v11M694.500 416v11M733.500 416v11" stroke="#c8c8c8" stroke-width=".7"/>
<rect x="737" y="417" width="6" height="9" rx="1" fill="#3f8fd5"/><circle cx="743" cy="424" r="2.300" fill="#5cb531"/>
<text x="747" y="424.500" font-size="7" fill="#333" textLength="38" lengthAdjust="spacingAndGlyphs">7819 / 18 Kb</text>
</svg>
</body></html>
